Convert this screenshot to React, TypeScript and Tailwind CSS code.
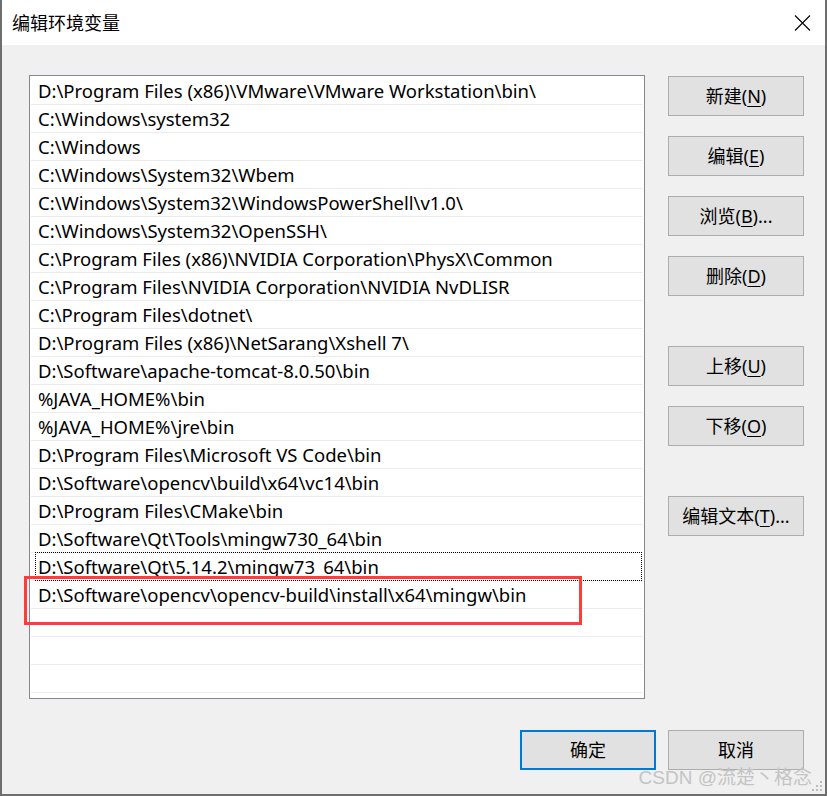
import React from "react";

const rows = [
  "D:\\Program Files (x86)\\VMware\\VMware Workstation\\bin\\",
  "C:\\Windows\\system32",
  "C:\\Windows",
  "C:\\Windows\\System32\\Wbem",
  "C:\\Windows\\System32\\WindowsPowerShell\\v1.0\\",
  "C:\\Windows\\System32\\OpenSSH\\",
  "C:\\Program Files (x86)\\NVIDIA Corporation\\PhysX\\Common",
  "C:\\Program Files\\NVIDIA Corporation\\NVIDIA NvDLISR",
  "C:\\Program Files\\dotnet\\",
  "D:\\Program Files (x86)\\NetSarang\\Xshell 7\\",
  "D:\\Software\\apache-tomcat-8.0.50\\bin",
  "%JAVA_HOME%\\bin",
  "%JAVA_HOME%\\jre\\bin",
  "D:\\Program Files\\Microsoft VS Code\\bin",
  "D:\\Software\\opencv\\build\\x64\\vc14\\bin",
  "D:\\Program Files\\CMake\\bin",
  "D:\\Software\\Qt\\Tools\\mingw730_64\\bin",
  "D:\\Software\\Qt\\5.14.2\\mingw73_64\\bin",
  "D:\\Software\\opencv\\opencv-build\\install\\x64\\mingw\\bin",
  "",
  "",
  "",
];

function Btn({
  label,
  k,
  suffix = "",
  primary = false,
  className = "",
}: {
  label: string;
  k?: string;
  suffix?: string;
  primary?: boolean;
  className?: string;
}) {
  return (
    <div
      className={
        "w-[136px] h-[40px] flex items-center justify-center bg-[#e1e1e1] text-[18px] text-black leading-none " +
        (primary ? "border-2 border-[#0078d7] " : "border border-[#adadad] ") +
        className
      }
    >
      <span>
        {label}
        {k ? (
          <>
            (<span className="underline underline-offset-[3px]">{k}</span>)
          </>
        ) : null}
        {suffix}
      </span>
    </div>
  );
}

export default function App() {
  return (
    <div
      className="w-[827px] h-[796px] flex flex-col bg-[#f0f0f0] border-l-2 border-r-2 border-b-2 border-[#6e6e6e] relative overflow-hidden"
      style={{ fontFamily: '"Noto Sans", "Noto Sans CJK SC", sans-serif' }}
    >
      {/* title bar */}
      <div className="h-[45px] bg-white flex items-center justify-between pl-[10px] pr-[14px] shrink-0">
        <span className="text-[18px] text-black" style={{ fontFamily: '"Noto Sans CJK SC", sans-serif' }}>
          编辑环境变量
        </span>
        <svg width="17" height="16" viewBox="0 0 17 16">
          <path d="M1 0.5 L16 15.5 M16 0.5 L1 15.5" stroke="#000" strokeWidth="1.1" fill="none" />
        </svg>
      </div>

      {/* body */}
      <div className="flex pt-[30px] pl-[27px]">
        <div className="relative w-[616px] h-[624px] border border-[#828790] bg-white px-[1px] pt-[1px]">
          {rows.map((r, i) => (
            <div
              key={i}
              className="relative h-[28px] border-b border-[#ececec] flex items-center pl-[7px] pt-[2px] text-[18.5px] text-black whitespace-nowrap leading-none"
            >
              {r}
              {i === 17 && (
                <div className="absolute left-[4px] right-[1px] top-[-1px] bottom-[-1px] border border-dotted border-black" />
              )}
            </div>
          ))}
          {/* red annotation box */}
          <div className="absolute left-[-6px] top-[500px] w-[558px] h-[49px] border-[3px] border-[#ff3b3b]" />
        </div>

        <div className="flex flex-col ml-[23px] pt-[1px]">
          <Btn label="新建" k="N" />
          <Btn label="编辑" k="E" className="mt-[20px]" />
          <Btn label="浏览" k="B" suffix="..." className="mt-[20px]" />
          <Btn label="删除" k="D" className="mt-[20px]" />
          <Btn label="上移" k="U" className="mt-[50px]" />
          <Btn label="下移" k="O" className="mt-[20px]" />
          <Btn label="编辑文本" k="T" suffix="..." className="mt-[50px]" />
        </div>
      </div>

      {/* bottom buttons */}
      <div className="flex justify-end gap-[12px] pr-[21px] mt-[31px]">
        <Btn label="确定" primary />
        <Btn label="取消" />
      </div>

      {/* watermark */}
      <div
        className="absolute right-[13px] bottom-[7px] text-[19px] text-[#c4c4c4] leading-none whitespace-nowrap"
        style={{ fontFamily: '"Liberation Sans", "Noto Sans CJK SC", sans-serif' }}
      >
        CSDN @流楚丶格念
      </div>
      {/* resize grip */}
      <svg className="absolute right-[3px] bottom-[3px]" width="10" height="10" viewBox="0 0 10 10">
        <rect x="8" y="0" width="2" height="2" fill="#bcbcbc" />
        <rect x="4" y="4" width="2" height="2" fill="#bcbcbc" />
        <rect x="8" y="4" width="2" height="2" fill="#bcbcbc" />
        <rect x="0" y="8" width="2" height="2" fill="#bcbcbc" />
        <rect x="4" y="8" width="2" height="2" fill="#bcbcbc" />
        <rect x="8" y="8" width="2" height="2" fill="#bcbcbc" />
      </svg>
    </div>
  );
}
